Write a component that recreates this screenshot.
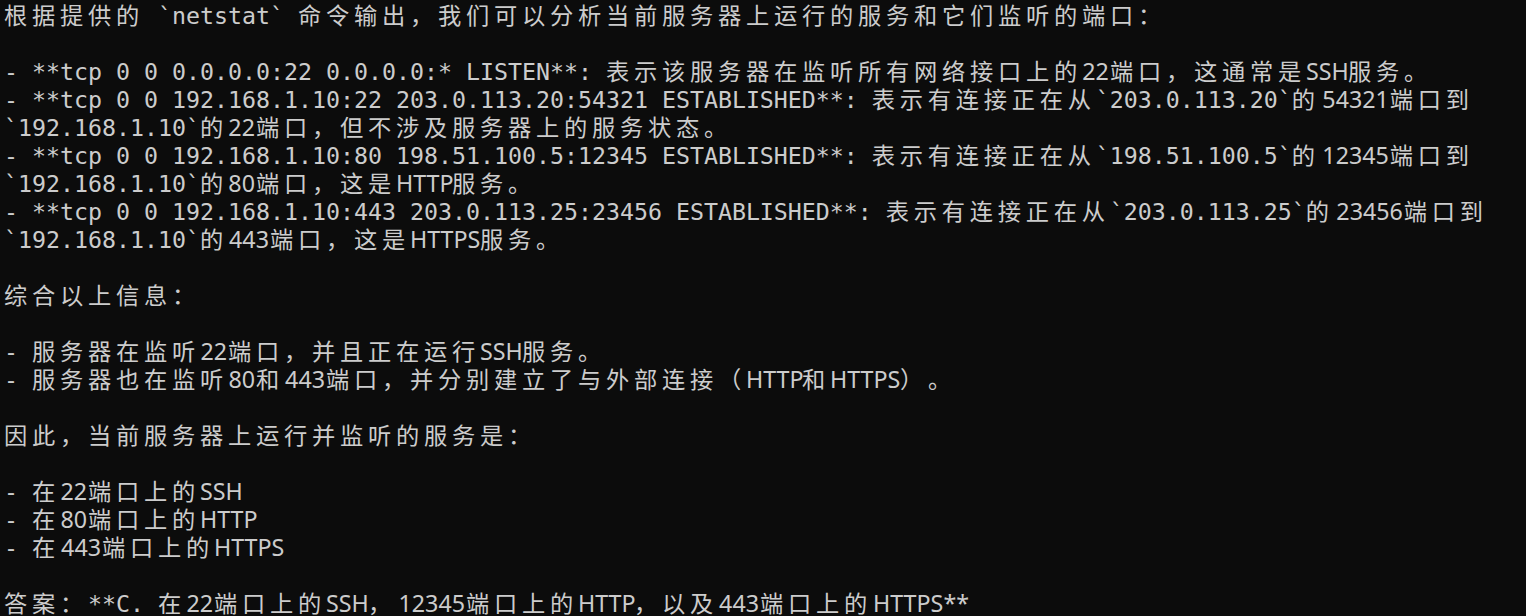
import React from 'react';

// terminal cell width for DejaVu Sans Mono at 23.25px
const CELL = 14;

const lines = [
    '根据提供的 `netstat` 命令输出，我们可以分析当前服务器上运行的服务和它们监听的端口：',
    '',
    '- **tcp 0 0 0.0.0.0:22 0.0.0.0:* LISTEN**: 表示该服务器在监听所有网络接口上的22端口，这通常是SSH服务。',
    '- **tcp 0 0 192.168.1.10:22 203.0.113.20:54321 ESTABLISHED**: 表示有连接正在从`203.0.113.20`的54321端口到',
    '`192.168.1.10`的22端口，但不涉及服务器上的服务状态。',
    '- **tcp 0 0 192.168.1.10:80 198.51.100.5:12345 ESTABLISHED**: 表示有连接正在从`198.51.100.5`的12345端口到',
    '`192.168.1.10`的80端口，这是HTTP服务。',
    '- **tcp 0 0 192.168.1.10:443 203.0.113.25:23456 ESTABLISHED**: 表示有连接正在从`203.0.113.25`的23456端口到',
    '`192.168.1.10`的443端口，这是HTTPS服务。',
    '',
    '综合以上信息：',
    '',
    '- 服务器在监听22端口，并且正在运行SSH服务。',
    '- 服务器也在监听80和443端口，并分别建立了与外部连接（HTTP和HTTPS）。',
    '',
    '因此，当前服务器上运行并监听的服务是：',
    '',
    '- 在22端口上的SSH',
    '- 在80端口上的HTTP',
    '- 在443端口上的HTTPS',
    '',
    '答案：**C. 在22端口上的SSH，12345端口上的HTTP，以及443端口上的HTTPS**',
];

const isWide = (c) => c.codePointAt(0) >= 0x2e80;

// split a line into wide (CJK), fallback (latin right after CJK) and mono runs
function tokenize(line) {
    const chars = Array.from(line);
    const out = [];
    let i = 0;
    let prevWide = false;
    while (i < chars.length) {
        const c = chars[i];
        if (isWide(c)) {
            out.push({ type: 'wide', text: c });
            prevWide = true;
            i++;
            continue;
        }
        let j = i;
        if (prevWide && /[A-Za-z0-9]/.test(c)) {
            while (j < chars.length && !isWide(chars[j]) && chars[j] !== ' ') j++;
            out.push({ type: 'prop', text: chars.slice(i, j).join('') });
        } else {
            while (j < chars.length && !isWide(chars[j])) j++;
            out.push({ type: 'mono', text: chars.slice(i, j).join('') });
        }
        prevWide = false;
        i = j;
    }
    return out;
}

function Line({ text }) {
    return (
        <div className="h-[28px] leading-[28px] whitespace-pre">
            {tokenize(text).map((tok, k) => {
                if (tok.type === 'wide') {
                    return (
                        <span
                            key={k}
                            className="inline-block font-['Noto_Sans_CJK_SC',sans-serif]"
                            style={{ width: CELL * 2 }}
                        >
                            {tok.text}
                        </span>
                    );
                }
                if (tok.type === 'prop') {
                    return (
                        <span
                            key={k}
                            className="inline-block text-right pr-px font-['Noto_Sans','Noto_Sans_CJK_SC',sans-serif]"
                            style={{ width: CELL * tok.text.length }}
                        >
                            {tok.text}
                        </span>
                    );
                }
                return <span key={k}>{tok.text}</span>;
            })}
            {text === '' ? ' ' : null}
        </div>
    );
}

export default function App() {
    return (
        <div className="w-full h-[616px] overflow-hidden bg-[#0c0c0c] text-[#cccccc] pl-[4px] text-[23.25px] font-['DejaVu_Sans_Mono','Noto_Sans_CJK_SC',monospace] antialiased">
            {lines.map((l, i) => (
                <Line key={i} text={l} />
            ))}
        </div>
    );
}
